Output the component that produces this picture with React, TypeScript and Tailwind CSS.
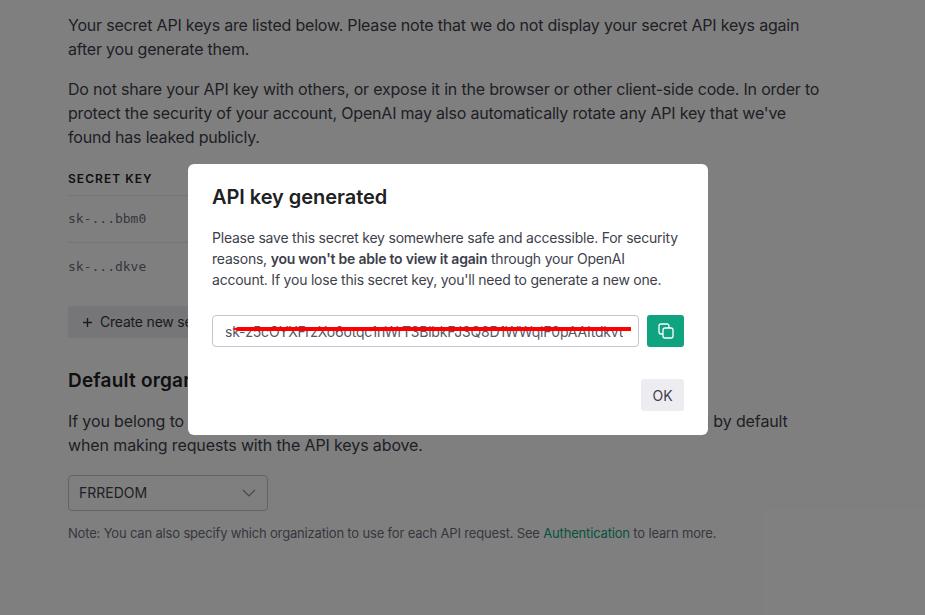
import React from 'react';

const sans = "font-['Inter','Noto_Sans',sans-serif]";

function CopyIcon() {
  return (
    <svg width="16" height="16" viewBox="0 0 16 16" fill="none" stroke="white" strokeWidth="1.3" strokeLinejoin="round">
      <rect x="5" y="5" width="10" height="10" rx="2" />
      <path d="M11 5V3a2 2 0 0 0-2-2H3a2 2 0 0 0-2 2v6a2 2 0 0 0 2 2h2" />
    </svg>
  );
}

function Background() {
  return (
    <div className="pl-[68px] pt-[13px] text-[16px] leading-[24px] tracking-[-0.2px] text-[#3e3f4b]">
      <p className="w-[757px]">
        Your secret API keys are listed below. Please note that we do not display your secret API keys again after you generate them.
      </p>
      <p className="mt-[16px] w-[757px]">
        Do not share your API key with others, or expose it in the browser or other client-side code. In order to protect the security of your account, OpenAI may also automatically rotate any API key that we've found has leaked publicly.
      </p>

      {/* Keys table */}
      <div className="mt-[16px] w-[300px]">
        <div className="h-[31px] border-b border-[#ececf1] pt-[6px] text-[12px] leading-[16px] font-semibold tracking-[1.05px] text-[#202123]">
          SECRET KEY
        </div>
        <div className="flex h-[47px] items-center border-b border-[#ececf1] font-['DejaVu_Sans_Mono',monospace] text-[13px] tracking-normal text-[#6e6e80]">
          sk-...bbm0
        </div>
        <div className="flex h-[47px] items-center font-['DejaVu_Sans_Mono',monospace] text-[13px] tracking-normal text-[#6e6e80]">
          sk-...dkve
        </div>
      </div>
      <button className="mt-[16px] flex h-[32px] w-[200px] items-center rounded-[3px] bg-[#ececf1] pl-[14px] text-[14px] tracking-[-0.2px] text-[#353740]">
        <svg className="mr-[7px]" width="11" height="11" viewBox="0 0 11 11" stroke="#353740" strokeWidth="1.4">
          <path d="M5.5 1v9M1 5.5h9" />
        </svg>
        Create new secret key
      </button>

      <h2 className="mt-[29px] text-[19px] leading-[28px] font-semibold tracking-[0.2px] text-[#202123]">Default organization</h2>
      <p className="mt-[14px] w-[740px] tracking-[-0.12px]">
        If you belong to multiple organizations, this setting controls which organization is used by default when making requests with the API keys above.
      </p>
      <div className="mt-[18px] flex h-[36px] w-[200px] items-center justify-between rounded-[4px] border border-[#c5c5d2] pl-[10px] pr-[11px] text-[14px] tracking-normal text-[#3e3f4b]">
        FRREDOM
        <svg width="14" height="8" viewBox="0 0 14 8" fill="none" stroke="#8e8ea0" strokeWidth="1.2">
          <path d="M1 1l6 6 6-6" />
        </svg>
      </div>
      <p className="mt-[13px] text-[13px] leading-[18px] tracking-[-0.17px] text-[#6e6e80]">
        Note: You can also specify which organization to use for each API request. See{' '}
        <span className="text-[#10a37f]">Authentication</span> to learn more.
      </p>
    </div>
  );
}

export default function App() {
  return (
    <div className={`relative h-[615px] w-[925px] overflow-hidden bg-white ${sans}`}>
      <Background />

      {/* Overlay */}
      <div className="absolute inset-0 flex items-start justify-center bg-black/50 pr-[29px]">
        <div className="relative mt-[164px] h-[271px] w-[520px] rounded-[6px] bg-white px-[24px] pt-[20px]">
          <h3 className="text-[20px] leading-[26px] font-semibold tracking-[-0.05px] text-[#202123]">API key generated</h3>
          <p className="mt-[17px] text-[14px] leading-[21px] tracking-[-0.22px] text-[#3e3f4b]">
            Please save this secret key somewhere safe and accessible. For security reasons, <b className="font-semibold">you won't be able to view it again</b> through your OpenAI account. If you lose this secret key, you'll need to generate a new one.
          </p>
          <div className="mt-[25px] flex items-center gap-[8px]">
            <div className="flex h-[32px] flex-1 items-center overflow-hidden rounded-[4px] border border-[#c5c5d2] pl-[12px] pr-[12px] text-[14px] tracking-[-0.2px] whitespace-nowrap text-[#565869]">
              <span className="block overflow-hidden">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</span>
            </div>
            <button className="flex h-[32px] w-[37px] shrink-0 items-center justify-center rounded-[3px] bg-[#10a37f]">
              <CopyIcon />
            </button>
          </div>
          {/* Red scribble over the key */}
          <svg className="absolute left-[44px] top-[162px]" width="399" height="6" viewBox="0 0 399 6">
            <polygon points="0,3 6,1 399,1 399,5 6,5" fill="#ff0000" />
          </svg>
          <div className="mt-[32px] flex justify-end">
            <button className="h-[32px] w-[43px] rounded-[3px] bg-[#ececf1] text-[14px] text-[#3e3f4b]">OK</button>
          </div>
        </div>
      </div>
    </div>
  );
}
